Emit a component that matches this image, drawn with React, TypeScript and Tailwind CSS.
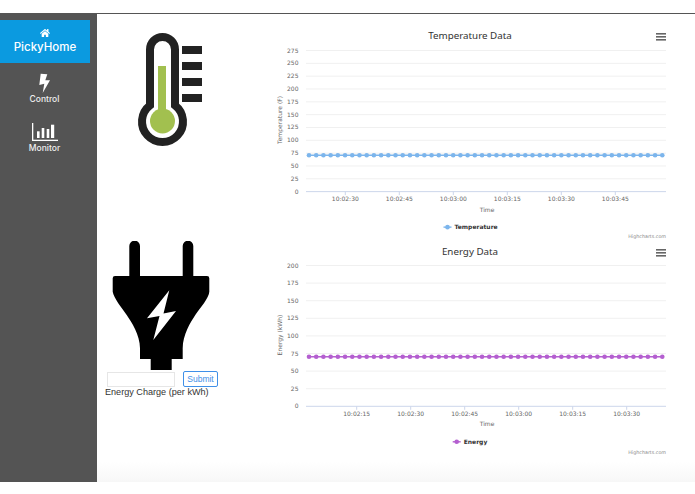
import { FaHome } from 'react-icons/fa';

interface ChartProps {
  title: string;
  yTitle: string;
  series: string;
  color: string;
  yLabels: number[];
  gridTop: number;
  gridStep: number;
  pointY: number;
  ticks: [number, string][];
  yTitleCenter: number;
  legendX: number;
}

const LEFT = 270;

// x positions are page x minus the chart's left edge
function Chart({ title, yTitle, series, color, yLabels, gridTop, gridStep, pointY, ticks, yTitleCenter, legendX }: ChartProps) {
  const bottom = gridTop + gridStep * (yLabels.length - 1);
  const points = Array.from({ length: 50 }, (_, i) => 309 - LEFT + i * 7.21);
  return (
    <svg width={425} height={216} viewBox="0 0 425 216" className="block overflow-visible" fontFamily="'DejaVu Sans', sans-serif">
      <text x={200} y={19} textAnchor="middle" fontSize={9.8} fill="#333333" fontFamily="'Noto Sans', sans-serif">{title}</text>
      <rect x={386} y={13} width={10} height={1.6} fill="#666666" />
      <rect x={386} y={16} width={10} height={1.6} fill="#666666" />
      <rect x={386} y={19} width={10} height={1.6} fill="#666666" />

      {yLabels.map((v, i) => {
        const y = gridTop + gridStep * i;
        return (
          <g key={v}>
            <line x1={36} x2={396} y1={y} y2={y} stroke={v === 0 ? '#ccd6eb' : '#f0f0f0'} strokeWidth={1} />
            <text x={28.5} y={y + 2} textAnchor="end" fontSize={6} fill="#666666">{v}</text>
          </g>
        );
      })}
      <text transform={`translate(11.5 ${yTitleCenter}) rotate(-90)`} textAnchor="middle" fontSize={6} fill="#666666">{yTitle}</text>

      {ticks.map(([x, label]) => (
        <g key={label}>
          <line x1={x - LEFT} x2={x - LEFT} y1={bottom} y2={bottom + 3.5} stroke="#ccd6eb" />
          <text x={x - LEFT} y={bottom + 9.5} textAnchor="middle" fontSize={6} fill="#666666">{label}</text>
        </g>
      ))}
      <text x={217} y={bottom + 20} textAnchor="middle" fontSize={6} fill="#666666">Time</text>

      <line x1={points[0]} x2={points[49]} y1={pointY} y2={pointY} stroke={color} strokeWidth={1.4} />
      {points.map(x => <circle key={x} cx={x} cy={pointY} r={2.3} fill={color} />)}

      <line x1={legendX} x2={legendX + 8} y1={bottom + 35.5} y2={bottom + 35.5} stroke={color} strokeWidth={1.4} />
      <circle cx={legendX + 4} cy={bottom + 35.5} r={2.3} fill={color} />
      <text x={legendX + 11} y={bottom + 37.5} fontSize={6} fontWeight={700} fill="#333333">{series}</text>
      <text x={396} y={218} textAnchor="end" fontSize={4.8} fill="#888888">Highcharts.com</text>
    </svg>
  );
}

function Thermometer() {
  return (
    <svg width={66} height={116} viewBox="136 32 66 116" className="block">
      <path d="M149 105.3V49.5a12.5 12.5 0 0 1 25 0v55.8a20.5 20.5 0 1 1-25 0Z" fill="#fff" stroke="#222222" strokeWidth={8} />
      <rect x={157} y={66} width={8} height={50} fill="#a2c04f" />
      <circle cx={161.5} cy={121} r={12.5} fill="#a2c04f" />
      <rect x={181} y={46} width={20} height={8} fill="#222222" />
      <rect x={181} y={62} width={20} height={8} fill="#222222" />
      <rect x={181} y={78} width={20} height={8} fill="#222222" />
      <rect x={181} y={94} width={20} height={8} fill="#222222" />
    </svg>
  );
}

function Plug() {
  return (
    <svg width={98} height={130} viewBox="112 241 98 130" className="block">
      <path d="M129.3 276V246a5.3 5.3 0 0 1 10.7 0V276h42.7V246a5.3 5.3 0 0 1 10.6 0V276h13.7a2.3 2.3 0 0 1 2.3 2.3V291.7C209 298 200 308 195.3 315S182.7 335 182.7 348.3V359H171.7V370H150.7V359H140V348.3C140 335 131.5 322 126.7 315S113.7 298 112.7 291.7V278.3a2.3 2.3 0 0 1 2.3-2.3Z" fill="#000" />
      <path d="M169.3 290.3L147 318.3L159.5 316L153.3 340L176 311L163.5 313.5Z" fill="#fff" />
    </svg>
  );
}

function ChartBars() {
  return (
    <svg width={26} height={18} viewBox="0 0 26 18" fill="#fff">
      <rect x={0} y={0} width={1.3} height={18} />
      <rect x={0} y={16.7} width={26} height={1.3} />
      <rect x={5} y={8.3} width={2.6} height={6.7} />
      <rect x={9.7} y={5} width={2.6} height={10} />
      <rect x={14.7} y={6} width={2.6} height={9} />
      <rect x={19} y={1.7} width={3.2} height={13.3} />
    </svg>
  );
}

function Bolt() {
  return (
    <svg width={14} height={20} viewBox="0 0 14 20" fill="#fff">
      <path d="M2.7.7L9.3 1.3L7.3 7.3L12 7.3L4.7 20L6.3 10.7L1.3 12Z" />
    </svg>
  );
}

export default function App() {
  return (
    <div className="h-[494px] w-[695px] overflow-hidden bg-white font-['Liberation_Sans',sans-serif]">
      <div className="h-[14px] border-b border-[#555555]" />
      <div className="flex h-[468px]">
        {/* Sidebar */}
        <nav className="flex w-[97px] shrink-0 flex-col bg-[#545454] pt-[6px] font-['Inter',sans-serif] text-white">
          <div className="flex h-[43px] w-[90px] flex-col items-center justify-center bg-[#0b9ae0]">
            <FaHome size={10} />
            <span className="mt-[2px] text-[11.5px] font-medium leading-[15px]">PickyHome</span>
          </div>
          <div className="mt-[10px] flex w-[89px] flex-col items-center">
            <Bolt />
            <span className="mt-[1px] text-[8.5px] font-medium leading-[11px] text-[#eeeeee]">Control</span>
          </div>
          <div className="mt-[18px] flex w-[89px] flex-col items-center">
            <ChartBars />
            <span className="mt-[2px] text-[8.5px] font-medium leading-[11px] text-[#eeeeee]">Monitor</span>
          </div>
        </nav>

        {/* Main */}
        <main className="flex flex-1 flex-col pt-[6px]">
          <div className="flex h-[216px]">
            <div className="w-[173px] pl-[40px] pt-[12px]">
              <Thermometer />
            </div>
            <Chart
              title="Temperature Data"
              yTitle="Temperature (F)"
              series="Temperature"
              color="#7cb5ec"
              yLabels={[275, 250, 225, 200, 175, 150, 125, 100, 75, 50, 25, 0]}
              gridTop={30.5}
              gridStep={12.83}
              pointY={135.3}
              yTitleCenter={100}
              legendX={173.5}
              ticks={[[345.3, '10:02:30'], [399.3, '10:02:45'], [453.3, '10:03:00'], [507.3, '10:03:15'], [561.3, '10:03:30'], [615.3, '10:03:45']]}
            />
          </div>
          <div className="flex h-[216px]">
            <div className="w-[173px] pt-[5px]">
              <div className="ml-[15px]">
                <Plug />
              </div>
              <div className="ml-[10px] flex items-center">
                <input className="h-[15px] w-[68px] border border-[#e6e6e6] bg-white" />
                <button className="ml-[8px] h-[16px] w-[35px] rounded-[2px] border border-[#3f8fe8] text-center text-[8.5px] leading-[14px] text-[#3f8fe8]">
                  Submit
                </button>
              </div>
              <p className="ml-[8px] text-[9.1px] leading-[11px] text-[#333333]">Energy Charge (per kWh)</p>
            </div>
            <Chart
              title="Energy Data"
              yTitle="Energy (kWh)"
              series="Energy"
              color="#b45fd0"
              yLabels={[200, 175, 150, 125, 100, 75, 50, 25, 0]}
              gridTop={29.5}
              gridStep={17.6}
              pointY={120.7}
              yTitleCenter={99}
              legendX={182.7}
              ticks={[[356.7, '10:02:15'], [410.7, '10:02:30'], [464.7, '10:02:45'], [518.7, '10:03:00'], [572.7, '10:03:15'], [626.7, '10:03:30']]}
            />
          </div>
          <div className="mt-[10px] h-[20px] bg-gradient-to-b from-white to-[#f7f7f7]" />
        </main>
      </div>
    </div>
  );
}
